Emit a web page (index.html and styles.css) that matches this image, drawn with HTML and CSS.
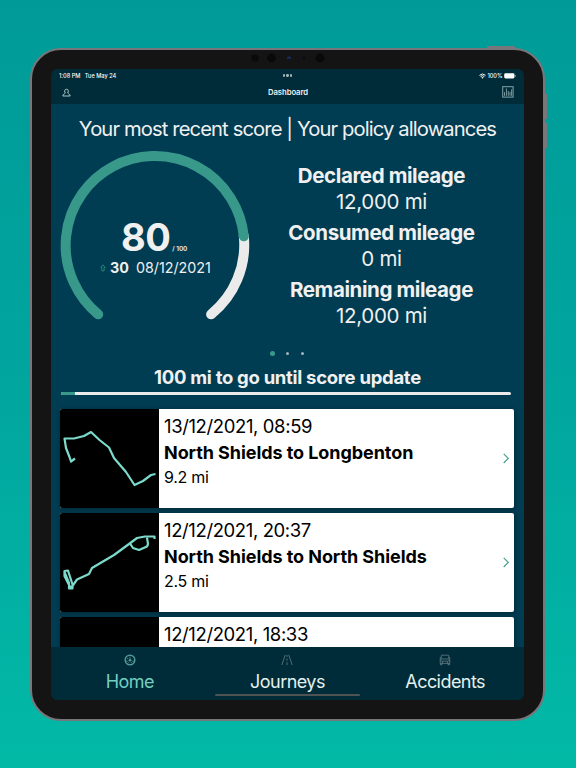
FILE: index.html
```html
<!DOCTYPE html>
<html lang="en">
<head>
    <meta charset="UTF-8">
    <meta name="viewport" content="width=device-width, initial-scale=1.0">
    <title>Dashboard</title>
    <link rel="stylesheet" href="styles.css">
</head>
<body>

    <div class="tablet">
        <!-- Hardware buttons and camera -->
        <span class="power-button"></span>
        <span class="volume-button volume-up"></span>
        <span class="volume-button volume-down"></span>
        <svg class="camera" width="80" height="12" viewBox="0 0 80 12">
            <circle cx="7" cy="6" r="3.6" fill="#0a0a0b"/>
            <circle cx="23.5" cy="6" r="4.4" fill="#09090a"/>
            <circle cx="41" cy="6" r="2" fill="#111b38"/>
            <path d="M39.5 6.5a1.5 1.2 0 0 1 3 0" fill="none" stroke="#25427c" stroke-width="0.8"/>
            <circle cx="56" cy="6" r="1.2" fill="#0b0b0c"/>
            <circle cx="72" cy="6" r="4.4" fill="#09090a"/>
        </svg>

        <div class="screen">
            <header class="header">
                <div class="status-bar">
                    <div class="status-left"><span>1:08 PM</span><span>Tue May 24</span></div>
                    <div class="status-dots"><i></i><i></i><i></i></div>
                    <div class="status-right">
                        <svg width="7" height="6" viewBox="0 0 14 11">
                            <path d="M1 4.2a8.7 8.7 0 0 1 12 0M3.3 6.6a5.4 5.4 0 0 1 7.4 0" fill="none" stroke="#fff" stroke-width="2"/>
                            <path d="M7 11l-2.2-2.4a3.2 3.2 0 0 1 4.4 0z" fill="#fff"/>
                        </svg>
                        <span>100%</span>
                        <svg width="12" height="6" viewBox="0 0 12 6">
                            <rect x="0.2" y="0.3" width="10.3" height="5.2" rx="1.4" fill="#fff"/>
                            <path d="M11 2.1v1.6q0.8-0.2 0.8-0.8t-0.8-0.8z" fill="#b7c4c8"/>
                        </svg>
                    </div>
                </div>
                <div class="nav-bar">
                    <svg class="user-icon" width="9" height="9" viewBox="0 0 9 9">
                        <path d="M3.4 5C2.3 4.2 2.2 1.2 4.5 1.2s2.2 3 1.1 3.8M3.4 5C3 5.8 1 5.9 0.8 8H8.2C8 5.9 6 5.8 5.6 5" fill="none" stroke="#a8c7c8" stroke-width="1"/>
                    </svg>
                    <h1 class="title">Dashboard</h1>
                    <svg class="chart-icon" width="12" height="12" viewBox="0 0 12 12">
                        <rect x="0.7" y="0.7" width="10.4" height="10.4" fill="none" stroke="#86a5a8" stroke-width="1"/>
                        <path d="M2.5 9.8V6.2M4.4 9.8V2.5M6.3 9.8V5M8 9.8V6M9.6 9.8V3.5" fill="none" stroke="#86a5a8" stroke-width="0.9"/>
                    </svg>
                </div>
            </header>

            <main class="content">
                <h2 class="heading">Your most recent score | Your policy allowances</h2>

                <div class="summary">
                    <div class="gauge">
                        <svg class="gauge-ring" width="190" height="172" viewBox="0 0 190 172">
                            <path d="M183.8 86A89.3 89.3 0 0 1 151.1 164.3" class="ring ring-rest"/>
                            <path d="M38.2 164.3A89.3 89.3 0 1 1 183.8 86.3" class="ring ring-score"/>
                        </svg>
                        <div class="score">
                            <div class="score-value"><strong>80</strong><span>/ 100</span></div>
                            <div class="score-change">
                                <svg width="6" height="8" viewBox="0 0 6 8">
                                    <path d="M3 0.8L0.8 3.6H1.9V6.9H4.1V3.6H5.2z" fill="none" stroke="#2f9384" stroke-width="0.8"/>
                                </svg>
                                <strong>30</strong>
                                <span>08/12/2021</span>
                            </div>
                        </div>
                    </div>
                    <dl class="mileage">
                        <dt>Declared mileage</dt>
                        <dd>12,000 mi</dd>
                        <dt>Consumed mileage</dt>
                        <dd>0 mi</dd>
                        <dt>Remaining mileage</dt>
                        <dd>12,000 mi</dd>
                    </dl>
                </div>

                <div class="pager"><i class="active"></i><i></i><i></i></div>

                <div class="update-text">100 mi to go until score update</div>
                <div class="progress"><div class="progress-fill"></div></div>

                <div class="journeys">
                    <div class="journey">
                        <svg class="map" width="99" height="99" viewBox="0 0 99 99">
                            <path d="M15 49.5L11 52.5L9.5 48L6 39L4.5 29.5L14 29.5L24 27L31 23L39.5 31L49 38.5L54 49L66 63L74.5 76L83 72L91 66L95.5 65"/>
                        </svg>
                        <div class="journey-info">
                            <div class="journey-date">13/12/2021, 08:59</div>
                            <div class="journey-name">North Shields to Longbenton</div>
                            <div class="journey-miles">9.2 mi</div>
                        </div>
                        <svg class="chevron" width="6" height="11" viewBox="0 0 6 11"><path d="M0.7 0.8L5.2 5.4L0.7 10"/></svg>
                    </div>
                    <div class="journey">
                        <svg class="map" width="99" height="99" viewBox="0 0 99 99">
                            <path d="M94.5 26V23.5L85 23.5L77 25L69 31L54 42L32 55L29 61L17 66.5L11 75L8.5 71L4.5 63V58L8 57.5L12.5 71.5V75.5H9L9 70L4.5 59"/>
                            <path d="M70 30.5L73 35L79 37L87 33.5L88 31L87 24.5"/>
                        </svg>
                        <div class="journey-info">
                            <div class="journey-date">12/12/2021, 20:37</div>
                            <div class="journey-name">North Shields to North Shields</div>
                            <div class="journey-miles">2.5 mi</div>
                        </div>
                        <svg class="chevron" width="6" height="11" viewBox="0 0 6 11"><path d="M0.7 0.8L5.2 5.4L0.7 10"/></svg>
                    </div>
                    <div class="journey">
                        <svg class="map" width="99" height="99" viewBox="0 0 99 99"></svg>
                        <div class="journey-info">
                            <div class="journey-date">12/12/2021, 18:33</div>
                        </div>
                    </div>
                </div>
            </main>

            <footer class="tab-bar">
                <a class="tab active">
                    <svg width="12" height="12" viewBox="0 0 12 12">
                        <circle cx="6" cy="6" r="4.8" fill="none" stroke="#549a96" stroke-width="1.5"/>
                        <path d="M6 2.8V6.6M3.1 4L4.1 5M2 7.2H3.8M8.2 7.2H10M4 9.2L5 8.2M8 9.2L7 8.2" fill="none" stroke="#549a96" stroke-width="0.8"/>
                        <circle cx="6" cy="6.3" r="1.3" fill="#549a96"/>
                    </svg>
                    <span>Home</span>
                </a>
                <a class="tab">
                    <svg width="12" height="12" viewBox="0 0 12 12">
                        <path d="M4.3 0.8L0.8 11M7.7 0.8L11.2 11M6 1V3M6 4.5V6.7M6 8.2V11" fill="none" stroke="#647f86" stroke-width="0.8"/>
                    </svg>
                    <span>Journeys</span>
                </a>
                <a class="tab">
                    <svg width="12" height="12" viewBox="0 0 12 12">
                        <path d="M0.6 3.8H2.1M9.9 3.8H11.4M2 5L2.4 1.2H9.6L10 5M1.2 5H10.8V9.4H1.2zM1.4 9.4V10.8H3V9.4M9 9.4V10.8H10.6V9.4M1.2 6.9H3.2M8.8 6.9H10.8M3.4 9.3V7.2H8.6V9.3" fill="none" stroke="#647f86" stroke-width="0.8"/>
                    </svg>
                    <span>Accidents</span>
                </a>
                <div class="home-indicator"></div>
            </footer>
        </div>
    </div>

</body>
</html>
```
FILE: styles.css
```css
* {
    box-sizing: border-box;
}

body {
    margin: 0;
    height: 768px;
    padding: 48px 0 0 30px;
    overflow: hidden;
    font-family: Inter, 'Liberation Sans', sans-serif;
    background: linear-gradient(180deg, #009b98 0%, #01a49e 45%, #02b9a6 100%);
}

.tablet {
    position: relative;
    width: 515px;
    height: 673px;
    padding: 19px 19px;
    border: 2px solid #77777b;
    border-radius: 31px;
    background-color: #141414;
}

.power-button {
    position: absolute;
    top: -4px;
    right: 28px;
    width: 28px;
    height: 2px;
    border-radius: 1px 1px 0 0;
    background-color: #77777b;
}

.volume-button {
    position: absolute;
    right: -4px;
    width: 2px;
    height: 25px;
    background-color: #77777b;
}

.volume-up {
    top: 44px;
}

.volume-down {
    top: 73px;
}

.camera {
    position: absolute;
    top: 2px;
    left: 216px;
}

.screen {
    display: flex;
    flex-direction: column;
    width: 473px;
    height: 631px;
    border-radius: 7px;
    overflow: hidden;
    background-color: #003c52;
    color: #f0f0f0;
}

.header {
    height: 35px;
    background-color: #002b38;
}

.status-bar {
    display: grid;
    grid-template-columns: 1fr auto 1fr;
    align-items: center;
    height: 13px;
    padding: 0 8px 0 8px;
    font-size: 5.6px;
    font-weight: 500;
    color: #fff;
}

.status-left {
    display: flex;
    gap: 4.5px;
}

.status-dots {
    display: flex;
    gap: 1.5px;
}

.status-dots i {
    width: 2.3px;
    height: 2.3px;
    border-radius: 50%;
    background-color: #a3b2b6;
}

.status-right {
    display: flex;
    justify-content: flex-end;
    align-items: center;
    gap: 1.5px;
}

.nav-bar {
    display: grid;
    grid-template-columns: 1fr auto 1fr;
    align-items: center;
    height: 20px;
    padding: 0 10px 0 11px;
}

.title {
    margin: 0;
    font-size: 7.7px;
    font-weight: 600;
    letter-spacing: -0.05px;
}

.chart-icon {
    justify-self: end;
}

.content {
    height: 543px;
    overflow: hidden;
}

.heading {
    margin: 12px 0 0;
    font-size: 20.2px;
    line-height: 26px;
    font-weight: 400;
    letter-spacing: -0.88px;
    text-align: center;
    white-space: nowrap;
}

.summary {
    display: flex;
    height: 172px;
    margin-top: 8px;
    padding-left: 9px;
}

.gauge {
    display: grid;
    width: 190px;
    height: 172px;
}

.gauge-ring,
.score {
    grid-area: 1 / 1;
}

.ring {
    fill: none;
    stroke-width: 10;
    stroke-linecap: round;
}

.ring-rest {
    stroke: #ebebeb;
}

.ring-score {
    stroke: #38998b;
}

.score {
    padding-top: 65px;
}

.score-value {
    display: flex;
    align-items: baseline;
    height: 43px;
    padding-left: 61px;
    line-height: 44px;
}

.score-value strong {
    font-size: 38px;
    font-weight: 700;
    letter-spacing: -0.6px;
}

.score-value span {
    margin-left: 2px;
    font-size: 6.4px;
    line-height: 8px;
    font-weight: 600;
}

.score-change {
    display: flex;
    align-items: center;
    padding-left: 40px;
    font-size: 14.3px;
    line-height: 20px;
}

.score-change strong {
    margin: 0 7px 0 4px;
}

.mileage {
    flex: 1;
    margin: 12px 11px 0 0;
    text-align: center;
    font-size: 20.5px;
}

.mileage dt {
    height: 27px;
    line-height: 27px;
    font-weight: 700;
    letter-spacing: -0.4px;
}

.mileage dd {
    height: 30px;
    margin: 0;
    line-height: 26px;
    letter-spacing: -0.3px;
}

.pager {
    display: flex;
    align-items: center;
    justify-content: center;
    gap: 11.5px;
    height: 6px;
    margin-top: 28px;
    padding-right: 2px;
}

.pager i {
    width: 3px;
    height: 3px;
    border-radius: 50%;
    background-color: #a3b5bb;
}

.pager .active {
    width: 5px;
    height: 5px;
    background-color: #38998b;
}

.update-text {
    margin-top: 9px;
    font-size: 18.5px;
    line-height: 24px;
    font-weight: 700;
    letter-spacing: -0.29px;
    text-align: center;
}

.progress {
    height: 3.4px;
    margin: 2.6px 13px 0 10px;
    border-radius: 2px;
    overflow: hidden;
    background-color: #ebebeb;
}

.progress-fill {
    width: 14px;
    height: 100%;
    background-color: #38998b;
}

.journeys {
    display: flex;
    flex-direction: column;
    gap: 4.7px;
    margin: 14.4px 10px 0 9px;
}

.journey {
    display: flex;
    flex: none;
    align-items: flex-start;
    height: 99px;
    padding-right: 5px;
    border-radius: 2px;
    overflow: hidden;
    background-color: #fff;
    color: #000;
    box-shadow: 1px 1px 4px rgba(0, 20, 30, 0.5);
}

.map {
    flex: none;
    background-color: #000;
}

.map path {
    fill: none;
    stroke: #7bdacb;
    stroke-width: 2.2;
    stroke-linejoin: round;
}

.journey-info {
    flex: 1;
    padding: 4px 0 0 5px;
    white-space: nowrap;
}

.journey-date {
    font-size: 18.5px;
    line-height: 26px;
    letter-spacing: -0.38px;
}

.journey-name {
    font-size: 18px;
    line-height: 27px;
    font-weight: 700;
    letter-spacing: -0.07px;
}

.journey-miles {
    font-size: 16px;
    line-height: 23px;
    letter-spacing: -0.3px;
}

.chevron {
    align-self: center;
}

.chevron path {
    fill: none;
    stroke: #45a093;
    stroke-width: 1.2;
}

.tab-bar {
    position: relative;
    display: grid;
    grid-template-columns: repeat(3, 1fr);
    height: 53px;
    background-color: #002b38;
}

.tab {
    display: flex;
    flex-direction: column;
    align-items: center;
    padding-top: 7px;
    font-size: 18px;
    line-height: 31px;
    letter-spacing: -0.55px;
    color: #e3f1ef;
}

.tab.active {
    color: #72cfc1;
}

/* Sits over the bottom edge of the tabs */
.home-indicator {
    position: absolute;
    left: 164px;
    bottom: 4px;
    width: 145px;
    height: 2.5px;
    border-radius: 2px;
    background-color: #4f5354;
}
```
